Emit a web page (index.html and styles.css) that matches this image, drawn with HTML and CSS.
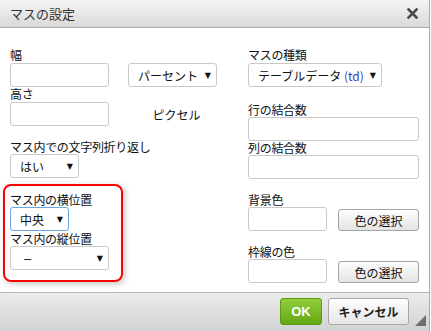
FILE: index.html
```html
<!DOCTYPE html>
<html lang="ja">

<head>
    <meta charset="UTF-8">
    <title>マスの設定</title>
    <link rel="stylesheet" href="styles.css">
</head>

<body>
    <div class="dialog">
        <div class="dialog-title">
            <span>マスの設定</span>
            <svg class="close-icon" width="11" height="11" viewBox="0 0 11 11">
                <path d="M1.5 1.5 L9.5 9.5 M9.5 1.5 L1.5 9.5" stroke="#4a4a4a" stroke-width="2.6" stroke-linecap="square"/>
            </svg>
        </div>

        <div class="dialog-body">
            <div class="col-left">
                <div class="label">幅</div>
                <div class="row first-row">
                    <input type="text" class="input w99">
                    <div class="select w89"><span>パーセント</span><span class="arrow">▼</span></div>
                </div>
                <div class="label">高さ</div>
                <div class="row mt1">
                    <input type="text" class="input w99">
                    <span class="unit">ピクセル</span>
                </div>

                <div class="label mt14">マス内での文字列折り返し</div>
                <div class="select w69"><span>はい</span><span class="arrow">▼</span></div>

                <div class="highlight">
                    <div class="label">マス内の横位置</div>
                    <div class="select w59 focused"><span>中央</span><span class="arrow">▼</span></div>
                    <div class="label">マス内の縦位置</div>
                    <div class="select w99"><span class="dash">–</span><span class="arrow">▼</span></div>
                </div>
            </div>

            <div class="col-right">
                <div class="label">マスの種類</div>
                <div class="select w134 first-row"><span>テーブルデータ <em>(td)</em></span><span class="arrow">▼</span></div>

                <div class="label mt16">行の結合数</div>
                <input type="text" class="input wide">
                <div class="label">列の結合数</div>
                <input type="text" class="input wide">

                <div class="label mt14">背景色</div>
                <div class="row color-row">
                    <input type="text" class="input w79">
                    <button class="color-button">色の選択</button>
                </div>
                <div class="label mt14">枠線の色</div>
                <div class="row color-row">
                    <input type="text" class="input w79">
                    <button class="color-button">色の選択</button>
                </div>
            </div>
        </div>

        <div class="dialog-footer">
            <button class="ok-button">OK</button>
            <button class="cancel-button">キャンセル</button>
            <span class="grip"></span>
        </div>
    </div>
</body>

</html>
```

FILE: styles.css
```css
body {
    margin: 0;
    padding: 0;
    background-color: #fff;
    font-family: "Noto Sans CJK JP", "Liberation Sans", sans-serif;
    font-size: 12px;
    color: #111;
}

.dialog {
    width: 429px;
    height: 331px;
    border-right: 1px solid #a9a9a9;
    background-color: #fff;
    display: flex;
    flex-direction: column;
}

.dialog-title {
    height: 28px;
    box-sizing: border-box;
    border-bottom: 1px solid #a8a8a8;
    background: linear-gradient(#f5f5f5, #d9d9d9);
    display: flex;
    align-items: center;
    justify-content: space-between;
    padding: 0 11px 1px 10px;
    font-size: 13px;
    color: #333;
}

.close-icon {
    display: block;
}

.dialog-body {
    height: 264px;
    box-sizing: border-box;
    padding: 20px 10px 0 10px;
    display: grid;
    grid-template-columns: 238px 171px;
}

.label {
    line-height: 14px;
    white-space: nowrap;
    letter-spacing: -0.3px;
}

.row {
    display: flex;
    align-items: center;
    gap: 19px;
}

.first-row {
    margin-top: 1px;
}

.mt1 {
    margin-top: 1px;
}

.mt14 {
    margin-top: 14px;
}

.mt16 {
    margin-top: 16px;
}

.input {
    display: block;
    height: 24px;
    box-sizing: border-box;
    margin: 0;
    border: 1px solid #c9c9c9;
    border-radius: 3px;
    background-color: #fff;
    font: inherit;
}

.w99 { width: 99px; }
.w79 { width: 79px; }
.wide { width: 171px; }

.select {
    height: 24px;
    box-sizing: border-box;
    border: 1px solid #c9c9c9;
    border-radius: 3px;
    background-color: #fff;
    display: flex;
    align-items: center;
    justify-content: space-between;
    padding: 0 5px 0 9px;
    white-space: nowrap;
}

.select em {
    font-style: normal;
    color: #3a3ab8;
}

.select .arrow {
    font-family: "DejaVu Sans", sans-serif;
    font-size: 8px;
    color: #111;
}

.select .dash {
    padding-left: 4px;
    font-family: "Liberation Sans", sans-serif;
    font-size: 13px;
}

.select.focused {
    border-color: #6aa7e0;
}

.w89 { width: 89px; }
.w69 { width: 69px; }
.w59 { width: 59px; }
.w134 { width: 134px; }

.unit {
    width: 89px;
    text-align: center;
    padding-left: 4px;
}

.highlight {
    width: 120px;
    height: 98px;
    box-sizing: border-box;
    margin: 6px 0 0 -7px;
    padding: 7px 5px 0 5px;
    border: 2px solid #f00;
    border-radius: 8px;
    box-shadow: 2px 2px 6px rgba(0, 0, 0, 0.22);
}

.highlight .select {
    margin-bottom: 1px;
}

.color-row {
    gap: 11px;
    align-items: flex-end;
}

.color-button {
    width: 81px;
    height: 22px;
    margin: 0;
    padding: 0;
    border: 1px solid #a4a4a4;
    border-radius: 3px;
    background: linear-gradient(#fdfdfd, #e4e4e4);
    font: inherit;
    color: #111;
}

.dialog-footer {
    position: relative;
    flex: 1;
    border-top: 1px solid #b8b8b8;
    background: linear-gradient(#ebebeb, #d3d3d3);
    display: flex;
    justify-content: flex-end;
    align-items: flex-start;
    gap: 6px;
    padding: 5px 20px 0 0;
}

.ok-button {
    width: 42px;
    height: 27px;
    border: 1px solid #5c9a12;
    border-radius: 3px;
    background: linear-gradient(#92cd3c, #63a814);
    color: #fff;
    font-family: "Liberation Sans", sans-serif;
    font-weight: bold;
    font-size: 13px;
    padding: 0;
}

.cancel-button {
    width: 81px;
    height: 27px;
    border: 1px solid #a6a6a6;
    border-radius: 3px;
    background: linear-gradient(#fefefe, #e6e6e6);
    color: #222;
    font: inherit;
    font-weight: bold;
    padding: 0;
}

.grip {
    position: absolute;
    right: 3px;
    bottom: 5px;
    width: 0;
    height: 0;
    border-left: 11px solid transparent;
    border-bottom: 11px solid #6e6e6e;
}
```
